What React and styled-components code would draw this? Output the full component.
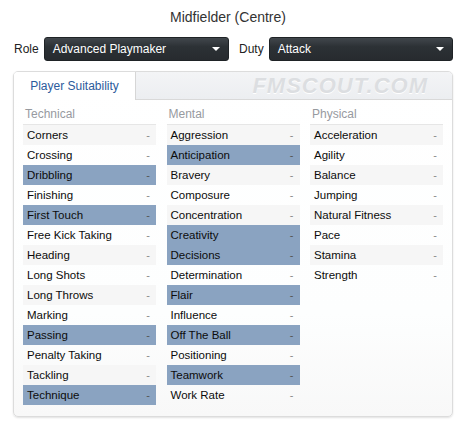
import React from "react";
import styled, { createGlobalStyle } from "styled-components";

const GlobalStyle = createGlobalStyle`
  body {
    margin: 0;
    background: #ffffff;
    font-family: "Liberation Sans", Arial, sans-serif;
    color: #222;
  }
`;

const Page = styled.div`
  width: 466px;
  height: 431px;
  box-sizing: border-box;
  padding: 8px 13px 0 13px;
`;

const Title = styled.h1`
  margin: 0;
  padding-right: 10px;
  font-size: 14px;
  font-weight: normal;
  line-height: 18px;
  text-align: center;
  color: #333;
`;

const Toolbar = styled.div`
  display: flex;
  align-items: center;
  margin-top: 11px;
  height: 24px;
`;

const Label = styled.span`
  font-size: 12px;
  color: #222;
  padding-left: ${(p) => p.$indent || 0}px;
  margin-right: 5px;
`;

const Select = styled.div`
  box-sizing: border-box;
  width: ${(p) => p.$width}px;
  height: 24px;
  margin-right: ${(p) => p.$gap || 0}px;
  display: flex;
  align-items: center;
  justify-content: space-between;
  padding: 0 8px 0 8px;
  border-radius: 3px;
  border: 1px solid #1f2326;
  background: linear-gradient(#41474c, #2c3135 40%, #272b2f);
  color: #fff;
  font-size: 12px;
`;

const Caret = styled.span`
  width: 0;
  height: 0;
  border-left: 4px solid transparent;
  border-right: 4px solid transparent;
  border-top: 4px solid #fff;
`;

const Panel = styled.div`
  margin-top: 10px;
  width: 440px;
  height: 346px;
  box-sizing: border-box;
  border: 1px solid #dcdcdc;
  border-radius: 5px;
  background: linear-gradient(#ffffff, #fdfefe 70%, #f8f8f8);
  box-shadow: 0 1px 2px rgba(0, 0, 0, 0.12);
  overflow: hidden;
`;

const TabBar = styled.div`
  display: flex;
  align-items: stretch;
  height: 27px;
  background: linear-gradient(#f3f4f6, #eceef1);
  border-bottom: 1px solid #d9d9d9;
`;

const Tab = styled.div`
  width: 121px;
  display: flex;
  align-items: center;
  justify-content: center;
  background: #fff;
  border-right: 1px solid #d6d6d6;
  margin-bottom: -1px;
  color: #2c5b9c;
  font-size: 12px;
`;

const Watermark = styled.div`
  margin-left: auto;
  padding-right: 24px;
  display: flex;
  align-items: center;
  font-family: "Liberation Sans", Arial, sans-serif;
  font-weight: bold;
  font-style: italic;
  font-size: 22px;
  letter-spacing: 1px;
  color: #dcdee1;
  text-shadow: 0 1px 0 #ffffff;
`;

const Columns = styled.div`
  display: grid;
  grid-template-columns: 133px 133px 133px;
  column-gap: 10.5px;
  padding: 4px 9px 0 9px;
`;

const Column = styled.div`
  display: flex;
  flex-direction: column;
`;

const Heading = styled.div`
  height: 20px;
  line-height: 20px;
  padding-left: 2px;
  font-size: 12px;
  color: #979a9f;
  border-bottom: 1px solid #e6e6e6;
`;

const Row = styled.div`
  height: 20px;
  display: flex;
  align-items: center;
  justify-content: space-between;
  padding: 0 6px 0 4px;
  font-size: 11.5px;
  color: #0c0c0c;
  background: ${(p) => (p.$key ? "#8aa3c1" : p.$stripe ? "#f6f6f6" : "transparent")};
`;

const Dash = styled.span`
  color: ${(p) => (p.$key ? "#555" : "#8a8a8a")};
  font-size: 11px;
`;

const columns = [
  {
    title: "Technical",
    rows: [
      ["Corners"],
      ["Crossing"],
      ["Dribbling", true],
      ["Finishing"],
      ["First Touch", true],
      ["Free Kick Taking"],
      ["Heading"],
      ["Long Shots"],
      ["Long Throws"],
      ["Marking"],
      ["Passing", true],
      ["Penalty Taking"],
      ["Tackling"],
      ["Technique", true],
    ],
  },
  {
    title: "Mental",
    rows: [
      ["Aggression"],
      ["Anticipation", true],
      ["Bravery"],
      ["Composure"],
      ["Concentration"],
      ["Creativity", true],
      ["Decisions", true],
      ["Determination"],
      ["Flair", true],
      ["Influence"],
      ["Off The Ball", true],
      ["Positioning"],
      ["Teamwork", true],
      ["Work Rate"],
    ],
  },
  {
    title: "Physical",
    rows: [
      ["Acceleration"],
      ["Agility"],
      ["Balance"],
      ["Jumping"],
      ["Natural Fitness"],
      ["Pace"],
      ["Stamina"],
      ["Strength"],
    ],
  },
];

const App = () => {
  return (
    <Page>
      <GlobalStyle />
      <Title>Midfielder (Centre)</Title>
      <Toolbar>
        <Label $indent={1}>Role</Label>
        <Select $width={186} $gap={10}>
          Advanced Playmaker
          <Caret />
        </Select>
        <Label>Duty</Label>
        <Select $width={185}>
          Attack
          <Caret />
        </Select>
      </Toolbar>
      <Panel>
        <TabBar>
          <Tab>Player Suitability</Tab>
          <Watermark>FMSCOUT.COM</Watermark>
        </TabBar>
        <Columns>
          {columns.map((col) => (
            <Column key={col.title}>
              <Heading>{col.title}</Heading>
              {col.rows.map(([name, key], i) => (
                <Row key={name} $key={key} $stripe={i % 2 === 0}>
                  {name}
                  <Dash $key={key}>-</Dash>
                </Row>
              ))}
            </Column>
          ))}
        </Columns>
      </Panel>
    </Page>
  );
};

export default App;
